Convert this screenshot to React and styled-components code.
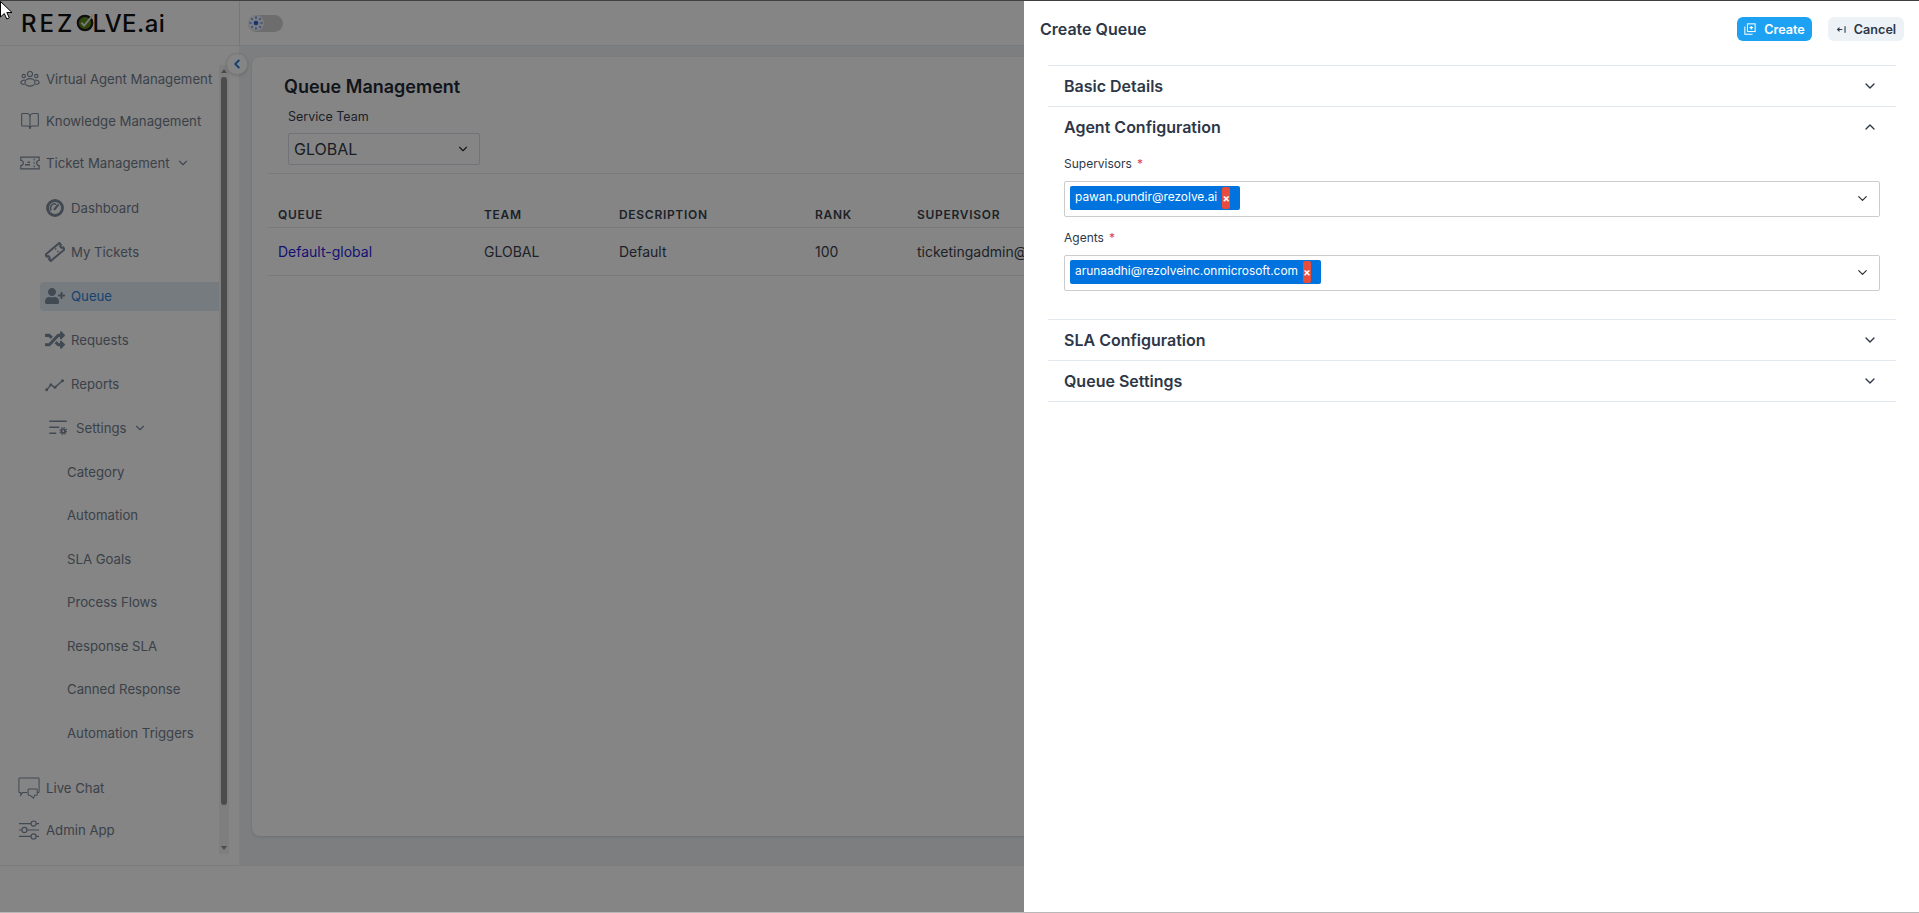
import React from "react";
import styled, { createGlobalStyle } from "styled-components";
import { BookOpen, ChevronDown, ChevronLeft, ChevronUp } from "lucide-react";
import { FaUserPlus, FaRandom } from "react-icons/fa";

const GlobalStyle = createGlobalStyle`
  html, body {
    margin: 0;
    padding: 0;
    height: 100%;
    overflow: hidden;
    background: #fff;
    font-family: Inter, "Noto Sans", sans-serif;
  }
  * { box-sizing: border-box; }
`;

const Screen = styled.div`
  position: relative;
  display: flex;
  flex-direction: column;
  width: 1919px;
  height: 913px;
  overflow: hidden;
  border-top: 1px solid #3f3f3f;
  border-bottom: 1px solid #b8b8b8;
  background: #fff;
`;

const TopBar = styled.header`
  display: flex;
  height: 45px;
  border-bottom: 1px solid #e8eaed;
`;

const Brand = styled.div`
  display: flex;
  align-items: center;
  width: 240px;
  padding-left: 21px;
  border-right: 1px solid #e2e5e9;
  color: #111;
  font-size: 24px;
  font-weight: 500;
`;

const BrandWord = styled.span`
  letter-spacing: ${(p) => (p.$wide ? 3 : 0.4)}px;
`;

const BrandDot = styled.svg`
  width: 20px;
  height: 18px;
  margin-right: -3px;
  flex: none;
`;

const TopTools = styled.div`
  display: flex;
  align-items: center;
  padding-left: 8px;
`;

const Toggle = styled.div`
  display: flex;
  align-items: center;
  width: 35px;
  height: 17px;
  border-radius: 9px;
  background: #d2d2d2;
`;

const ToggleKnob = styled.span`
  display: flex;
  align-items: center;
  justify-content: center;
  width: 16px;
  height: 16px;
  border-radius: 50%;
  background: #e9edf5;
  color: #2f62d8;
`;

const Middle = styled.div`
  display: flex;
  height: 820px;
  border-bottom: 1px solid #eceef0;
`;

const Sidebar = styled.aside`
  position: relative;
  display: flex;
  width: 240px;
  padding-right: 10px;
  border-right: 1px solid #f0f1f3;
`;

const CollapseButton = styled.button`
  position: absolute;
  top: 7px;
  right: -9px;
  z-index: 2;
  display: flex;
  align-items: center;
  justify-content: center;
  width: 22px;
  height: 22px;
  padding: 0;
  border: 1px solid #e6e8eb;
  border-radius: 50%;
  background: #fff;
  color: #2b82d9;
  box-shadow: 0 1px 3px rgba(0, 0, 0, 0.15);
`;

const Nav = styled.nav`
  flex: 1;
  padding-top: 12px;
  min-width: 0;
`;

const NavRow = styled.div`
  display: flex;
  align-items: center;
  gap: 6px;
  height: 42px;
  padding-left: 20px;
  color: #727d8c;
  font-size: 13.2px;
  white-space: nowrap;
  svg.lead {
    flex: none;
    width: 20px;
    height: 20px;
    color: #7e8ca0;
  }
  svg.wide {
    flex: none;
    width: 22px;
    height: 22px;
    margin-left: -2px;
    color: #7e8ca0;
  }
`;

const SubList = styled.div`
  padding-top: 2px;
  margin-right: -2px;
`;

const SubRow = styled.div`
  display: flex;
  align-items: center;
  height: 44px;
  padding-left: 40px;
`;

const SubPill = styled.div`
  display: flex;
  align-items: center;
  gap: 6px;
  flex: 1;
  height: 29px;
  padding-left: 5px;
  border-radius: 4px 0 0 4px;
  background: ${(p) => (p.$active ? "#e3ecf5" : "transparent")};
  color: ${(p) => (p.$active ? "#2b82d9" : "#727d8c")};
  font-size: 13.2px;
  svg {
    flex: none;
    width: 20px;
    height: 20px;
    color: #7e8ca0;
  }
`;

const Caret = styled(ChevronDown)`
  width: 14px;
  height: 14px;
  color: #7e8ca0;
`;

const SettingsRow = styled.div`
  display: flex;
  align-items: center;
  gap: 9px;
  height: 44px;
  padding-left: 49px;
  color: #727d8c;
  font-size: 13.2px;
  svg.lead {
    width: 18px;
    height: 18px;
    color: #7e8ca0;
  }
  ${Caret} {
    margin-left: -3px;
  }
`;

const ChildRow = styled.div`
  display: flex;
  align-items: center;
  height: 43.5px;
  padding-left: 67px;
  color: #727d8c;
  font-size: 13.2px;
`;

const BottomLinks = styled.div`
  margin-top: 12px;
`;

const ScrollTrack = styled.div`
  display: flex;
  flex-direction: column;
  align-items: center;
  width: 10px;
  margin: 19px 0 11px;
  background: #f2f2f2;
`;

const ScrollArrow = styled.span`
  flex: none;
  width: 0;
  height: 0;
  margin: 4px 0;
  border-left: 3px solid transparent;
  border-right: 3px solid transparent;
  ${(p) =>
    p.$down ? "border-top: 4px solid #8f8f8f;" : "border-bottom: 4px solid #8f8f8f;"}
`;

const ScrollThumb = styled.div`
  width: 6px;
  height: 728px;
  border-radius: 3px;
  background: #929292;
`;

const ScrollGap = styled.div`
  flex: 1;
`;

const Content = styled.main`
  flex: 1;
  padding: 11px 12px 29px;
  background: #eff1f3;
`;

const Card = styled.section`
  height: 100%;
  padding: 17px 16px 0;
  border-radius: 8px;
  background: #fff;
  box-shadow: 0 1px 3px rgba(0, 0, 0, 0.12);
`;

const PageTitle = styled.h1`
  margin: 0 0 0 16px;
  color: #1f2937;
  font-size: 18px;
  font-weight: 600;
  line-height: 26px;
`;

const FilterBlock = styled.div`
  padding: 9px 0 8px 20px;
  border-bottom: 1px solid #e6e8ec;
`;

const FieldLabel = styled.div`
  color: #374151;
  font-size: 12.5px;
  line-height: 16px;
  margin-bottom: 8px;
`;

const TeamSelect = styled.div`
  display: flex;
  align-items: center;
  justify-content: space-between;
  width: 192px;
  height: 32px;
  padding: 0 9px 0 5px;
  border: 1px solid #d8dde6;
  border-radius: 2px;
  color: #333b46;
  font-size: 16px;
  svg {
    width: 14px;
    height: 14px;
    color: #333;
  }
`;

const QueueTable = styled.div`
  margin-top: 27px;
`;

const TableRow = styled.div`
  display: grid;
  grid-template-columns: 206px 135px 196px 102px 1fr;
  align-items: center;
  height: ${(p) => (p.$head ? 27 : 48)}px;
  padding: ${(p) => (p.$head ? "1px 0 0 10px" : "0 0 0 10px")};
  border-bottom: 1px solid #e6e8ec;
  color: #3a424e;
  font-size: ${(p) => (p.$head ? 12 : 14)}px;
  font-weight: ${(p) => (p.$head ? 600 : 400)};
  letter-spacing: ${(p) => (p.$head ? "0.7px" : "0")};
  white-space: nowrap;
`;

const QueueLink = styled.a`
  color: #2a1fe0;
  text-decoration: none;
`;

const BottomStrip = styled.footer`
  flex: 1;
`;

const Backdrop = styled.div`
  position: absolute;
  inset: 0;
  z-index: 5;
  background: rgba(0, 0, 0, 0.48);
`;

const Drawer = styled.aside`
  position: absolute;
  top: 0;
  right: 0;
  bottom: 0;
  z-index: 6;
  width: 895px;
  background: #fff;
`;

const DrawerHead = styled.div`
  display: flex;
  align-items: center;
  justify-content: space-between;
  height: 64px;
  padding: 0 15px 8px 16px;
`;

const DrawerTitle = styled.h2`
  margin: 0;
  color: #2d3748;
  font-size: 16px;
  font-weight: 600;
`;

const HeadActions = styled.div`
  display: flex;
  gap: 16px;
`;

const ActionButton = styled.button`
  display: flex;
  align-items: center;
  justify-content: center;
  gap: ${(p) => (p.$primary ? 8 : 7)}px;
  width: ${(p) => (p.$primary ? 75 : 76)}px;
  height: 24px;
  padding: 0;
  border: 0;
  border-radius: 6px;
  background: ${(p) => (p.$primary ? "#1da1f2" : "#edf2f7")};
  color: ${(p) => (p.$primary ? "#fff" : "#2d3748")};
  font-family: inherit;
  font-size: 12.6px;
  font-weight: 600;
  svg {
    flex: none;
    width: ${(p) => (p.$primary ? 12 : 11)}px;
    height: ${(p) => (p.$primary ? 12 : 11)}px;
  }
`;

const Accordion = styled.div`
  margin: 0 23px 0 24px;
  border-top: 1px solid #e2e8f0;
`;

const AccordionItem = styled.div`
  border-bottom: 1px solid #e2e8f0;
`;

const AccordionHead = styled.div`
  display: flex;
  align-items: center;
  justify-content: space-between;
  height: 40px;
  padding: 0 18px 0 16px;
  color: #2d3748;
  font-size: 16px;
  font-weight: 600;
  svg {
    width: 16px;
    height: 16px;
    color: #2d3748;
  }
`;

const AccordionPanel = styled.div`
  padding: 9px 16px 28px;
`;

const PanelLabel = styled.div`
  height: 16px;
  margin: ${(p) => (p.$spaced ? "13px" : "0")} 0 9px;
  color: #2d3748;
  font-size: 12px;
  line-height: 16px;
`;

const Required = styled.span`
  margin-left: 5px;
  color: #e53e3e;
`;

const ChipInput = styled.div`
  display: flex;
  align-items: center;
  justify-content: space-between;
  height: 36px;
  padding: 0 9px 2px 5px;
  border: 1px solid #ccc;
  border-radius: 2px;
  svg {
    width: 15px;
    height: 15px;
    color: #333;
  }
`;

const Chip = styled.div`
  display: flex;
  align-items: center;
  height: 24px;
  padding: 0 10px 3px 5px;
  border-radius: 2px;
  background: #0073de;
  color: #fff;
  font-size: 11.9px;
`;

const ChipRemove = styled.span`
  display: flex;
  align-items: center;
  justify-content: center;
  width: 8px;
  height: 22px;
  margin: 3px 0 0 5px;
  border-radius: 2px;
  background: #e74c3c;
  color: #fff;
  font-size: 11px;
  font-weight: 700;
`;

const Cursor = styled.svg`
  position: absolute;
  top: 0;
  left: 0;
  z-index: 9;
  width: 13px;
  height: 19px;
`;

const AgentsIcon = () => (
  <svg className="lead" viewBox="0 0 24 24" fill="none" stroke="currentColor" strokeWidth="1.4">
    <circle cx="12" cy="6" r="3" />
    <circle cx="4.5" cy="8.5" r="2" />
    <circle cx="19.5" cy="8.5" r="2" />
    <ellipse cx="12" cy="16" rx="6" ry="4.5" />
    <path d="M6 13.5c-2-.5-4.5.5-5 2.5 0 1.5 2 2.500 4.500 2.500M18 13.500c2-.5 4.500.5 5 2.500 0 1.500-2 2.500-4.500 2.500" />
  </svg>
);

const TicketIcon = () => (
  <svg className="lead" viewBox="0 0 24 24" fill="none" stroke="currentColor" strokeWidth="1.4">
    <path d="M1 5h22v4a3 3 0 0 0 0 6v4H1v-4a3 3 0 0 0 0-6z" />
    <path d="M17 7v2M17 11v2M17 15v2" />
    <path d="M6 14h6M9 11h3" strokeWidth="1.700" />
  </svg>
);

const GaugeBadge = () => (
  <svg viewBox="0 0 24 24" fill="none" stroke="currentColor">
    <circle cx="12" cy="12" r="9" strokeWidth="3.500" />
    <path d="M7.500 15a5 5 0 0 1 6-7.500" strokeWidth="1.800" />
    <path d="M11.500 13.500l4-5" strokeWidth="2.600" strokeLinecap="round" />
  </svg>
);

const TiltedTicket = () => (
  <svg viewBox="0 0 24 24" fill="none" stroke="currentColor" strokeWidth="2.400">
    <g transform="rotate(-40 12 12)">
      <path d="M1 7h22v3a2 2 0 0 0 0 4v3H1v-3a2 2 0 0 0 0-4z" />
      <path d="M15 9v1.500M15 13v1.500" strokeWidth="2" />
    </g>
  </svg>
);

const ReportsLine = () => (
  <svg viewBox="0 0 24 24" fill="none" stroke="currentColor" strokeWidth="1.600" strokeLinecap="round">
    <path d="M2 19l5-6 5 3 9-8" />
    <circle cx="2" cy="19" r="1" fill="currentColor" />
    <circle cx="7" cy="13" r="1" fill="currentColor" />
    <circle cx="12" cy="16" r="1" fill="currentColor" />
    <circle cx="21" cy="8" r="1" fill="currentColor" />
  </svg>
);

const SettingsLines = () => (
  <svg className="lead" viewBox="0 0 24 24" fill="none" stroke="currentColor" strokeWidth="1.800" strokeLinecap="round">
    <path d="M1 3h22M1 11h12M1 19h8" />
    <circle cx="19" cy="16" r="2.500" strokeWidth="2.600" />
    <circle cx="19" cy="16" r="4.600" strokeWidth="1.400" strokeDasharray="1.800 1.800" strokeLinecap="butt" />
  </svg>
);

const ChatIcon = () => (
  <svg className="wide" viewBox="0 0 24 24" fill="none" stroke="currentColor" strokeWidth="1.100">
    <path d="M10 17H5l-2 3v-3H2a1 1 0 0 1-1-1V2a1 1 0 0 1 1-1h20a1 1 0 0 1 1 1v14a1 1 0 0 1-1 1h-1" />
    <path d="M12 13h8a1 1 0 0 1 1 1v5a1 1 0 0 1-1 1h-2l-1 3-4-3h-1a1 1 0 0 1-1-1v-5a1 1 0 0 1 1-1z" />
  </svg>
);

const AdminSliders = () => (
  <svg className="wide" viewBox="0 0 24 24" fill="none" stroke="currentColor" strokeWidth="1.300">
    <path d="M1 5h13M20 5h3M1 12h3M10 12h13M1 19h13M20 19h3" />
    <circle cx="17" cy="5" r="2.800" />
    <circle cx="7" cy="12" r="2.800" />
    <circle cx="17" cy="19" r="2.800" />
  </svg>
);

const SunDots = () => (
  <svg width="14" height="14" viewBox="0 0 14 14" fill="none" stroke="currentColor" strokeWidth="1.200">
    <circle cx="7" cy="7" r="2.300" fill="currentColor" stroke="none" />
    <path d="M7 .5v2M7 11.500v2M.5 7h2M11.500 7h2M2.400 2.400l1.200 1.200M10.400 10.400l1.200 1.200M2.400 11.600l1.200-1.200M10.400 3.600l1.200-1.200" />
  </svg>
);

const CreateIcon = () => (
  <svg viewBox="0 0 14 14" fill="none" stroke="currentColor" strokeWidth="1.200">
    <rect x="4" y="1" width="9" height="9" />
    <path d="M1 4v9h9" />
    <path d="M8.500 3.500v4M6.500 5.500h4" strokeWidth="1.400" />
  </svg>
);

const BackIcon = () => (
  <svg viewBox="0 0 14 14" fill="none" stroke="currentColor" strokeWidth="1.400">
    <path d="M2 7h6M4.500 4.500L2 7l2.500 2.500M11.500 3v8" />
  </svg>
);

const SETTINGS_CHILDREN = [
  "Category",
  "Automation",
  "SLA Goals",
  "Process Flows",
  "Response SLA",
  "Canned Response",
  "Automation Triggers",
];

function AgentField({ label, email, spaced }) {
  return (
    <>
      <PanelLabel $spaced={spaced}>
        {label}
        <Required>*</Required>
      </PanelLabel>
      <ChipInput>
        <Chip>
          {email}
          <ChipRemove>×</ChipRemove>
        </Chip>
        <ChevronDown />
      </ChipInput>
    </>
  );
}

export default function App() {
  return (
    <Screen>
      <GlobalStyle />
      <TopBar>
        <Brand>
          <BrandWord $wide>REZ</BrandWord>
          <BrandDot viewBox="0 0 22 20">
            <circle cx="11" cy="10" r="8" fill="#5d8a1c" stroke="#1c1c1c" strokeWidth="2.500" />
            <path d="M7 9.500l3 3.500 10-12" fill="none" stroke="#e8e8e8" strokeWidth="2" />
          </BrandDot>
          <BrandWord>LVE.ai</BrandWord>
        </Brand>
        <TopTools>
          <Toggle>
            <ToggleKnob>
              <SunDots />
            </ToggleKnob>
          </Toggle>
        </TopTools>
      </TopBar>

      <Middle>
        <Sidebar>
          <CollapseButton>
            <ChevronLeft size={14} strokeWidth={3.500} />
          </CollapseButton>
          <Nav>
            <NavRow>
              <AgentsIcon />
              Virtual Agent Management
            </NavRow>
            <NavRow>
              <BookOpen className="lead" strokeWidth={1.300} />
              Knowledge Management
            </NavRow>
            <NavRow>
              <TicketIcon />
              Ticket Management
              <Caret />
            </NavRow>
            <SubList>
              <SubRow>
                <SubPill>
                  <GaugeBadge />
                  Dashboard
                </SubPill>
              </SubRow>
              <SubRow>
                <SubPill>
                  <TiltedTicket />
                  My Tickets
                </SubPill>
              </SubRow>
              <SubRow>
                <SubPill $active>
                  <FaUserPlus />
                  Queue
                </SubPill>
              </SubRow>
              <SubRow>
                <SubPill>
                  <FaRandom />
                  Requests
                </SubPill>
              </SubRow>
              <SubRow>
                <SubPill>
                  <ReportsLine />
                  Reports
                </SubPill>
              </SubRow>
              <SettingsRow>
                <SettingsLines />
                Settings
                <Caret />
              </SettingsRow>
              {SETTINGS_CHILDREN.map((name) => (
                <ChildRow key={name}>{name}</ChildRow>
              ))}
            </SubList>
            <BottomLinks>
              <NavRow>
                <ChatIcon />
                Live Chat
              </NavRow>
              <NavRow>
                <AdminSliders />
                Admin App
              </NavRow>
            </BottomLinks>
          </Nav>
          <ScrollTrack>
            <ScrollArrow />
            <ScrollThumb />
            <ScrollGap />
            <ScrollArrow $down />
          </ScrollTrack>
        </Sidebar>

        <Content>
          <Card>
            <PageTitle>Queue Management</PageTitle>
            <FilterBlock>
              <FieldLabel>Service Team</FieldLabel>
              <TeamSelect>
                GLOBAL
                <ChevronDown />
              </TeamSelect>
            </FilterBlock>
            <QueueTable>
              <TableRow $head>
                <span>QUEUE</span>
                <span>TEAM</span>
                <span>DESCRIPTION</span>
                <span>RANK</span>
                <span>SUPERVISOR</span>
              </TableRow>
              <TableRow>
                <QueueLink href="#">Default-global</QueueLink>
                <span>GLOBAL</span>
                <span>Default</span>
                <span>100</span>
                <span>ticketingadmin@rezolve.ai</span>
              </TableRow>
            </QueueTable>
          </Card>
        </Content>
      </Middle>
      <BottomStrip />

      <Backdrop />
      <Drawer>
        <DrawerHead>
          <DrawerTitle>Create Queue</DrawerTitle>
          <HeadActions>
            <ActionButton $primary>
              <CreateIcon />
              Create
            </ActionButton>
            <ActionButton>
              <BackIcon />
              Cancel
            </ActionButton>
          </HeadActions>
        </DrawerHead>
        <Accordion>
          <AccordionItem>
            <AccordionHead>
              Basic Details
              <ChevronDown />
            </AccordionHead>
          </AccordionItem>
          <AccordionItem>
            <AccordionHead>
              Agent Configuration
              <ChevronUp />
            </AccordionHead>
            <AccordionPanel>
              <AgentField label="Supervisors" email="pawan.pundir@rezolve.ai" />
              <AgentField label="Agents" email="arunaadhi@rezolveinc.onmicrosoft.com" spaced />
            </AccordionPanel>
          </AccordionItem>
          <AccordionItem>
            <AccordionHead>
              SLA Configuration
              <ChevronDown />
            </AccordionHead>
          </AccordionItem>
          <AccordionItem>
            <AccordionHead>
              Queue Settings
              <ChevronDown />
            </AccordionHead>
          </AccordionItem>
        </Accordion>
      </Drawer>
      <Cursor viewBox="0 0 13 19">
        <path d="M.5.500v15.500l3.800-3.500 2.500 5.500 2.500-1.200-2.500-5.300h5.200z" fill="#fff" stroke="#000" strokeWidth="1" />
      </Cursor>
    </Screen>
  );
}
